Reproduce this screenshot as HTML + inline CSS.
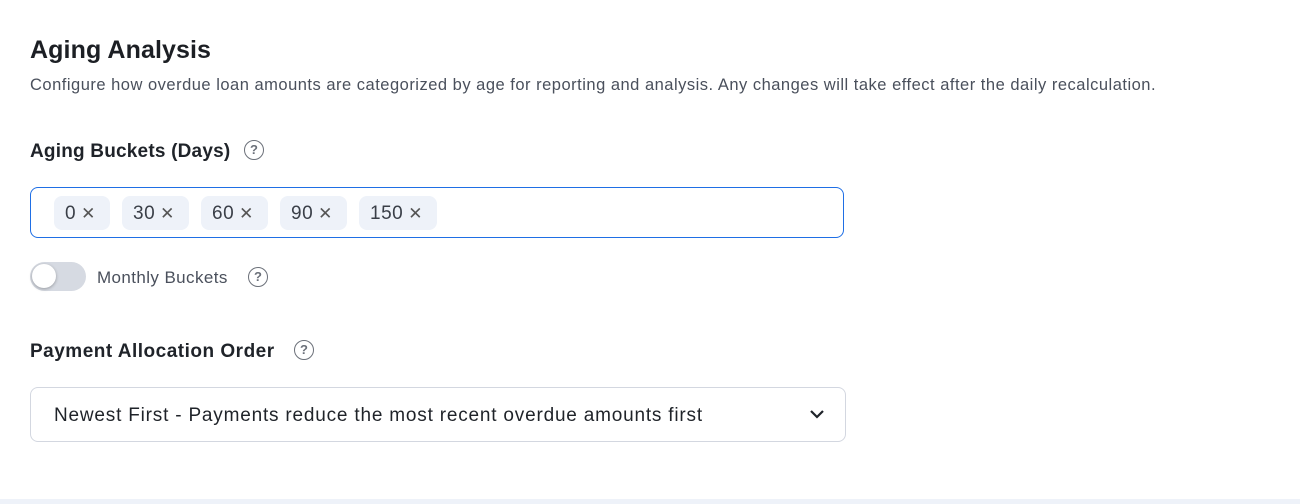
<!DOCTYPE html>
<html><head><style>
body{margin:0;width:1300px;height:504px;background:#fff;font-family:"Liberation Sans",sans-serif;position:relative;overflow:hidden;color:#1f2329}
.a{position:absolute}
h1{position:absolute;left:30px;top:36px;margin:0;font-size:25px;font-weight:bold;color:#1c1f24;letter-spacing:0.1px}
.desc{left:30px;top:76px;font-size:16.5px;color:#4a505c;letter-spacing:0.5px;white-space:nowrap}
.lab{font-size:19px;color:#1f2329;font-weight:bold;letter-spacing:0.2px}
.q{width:18px;height:18px;border:1.8px solid #6b7079;border-radius:50%;font-size:13px;color:#6b7079;text-align:center;line-height:18px;font-weight:bold}
.box{left:30px;top:187px;width:812px;height:49px;border:1.8px solid #1f6fe5;border-radius:8px}
.chip{position:absolute;top:8px;height:34px;background:#eef2f9;border-radius:8px;font-size:19px;line-height:36px;color:#3a3f48;padding:0 11px;box-sizing:border-box;letter-spacing:0.5px}
.chip span{font-size:17px;margin-left:5px;color:#555}
.tog{left:30px;top:262px;width:56px;height:29px;border-radius:15px;background:#d6dae2}
.knob{left:32px;top:264px;width:24px;height:24px;border-radius:50%;background:#fff;box-shadow:0 1px 3px rgba(0,0,0,.3)}
.sel{left:30px;top:387px;width:814px;height:53px;border:1.4px solid #d3d7e0;border-radius:8px}
</style></head><body>
<h1>Aging Analysis</h1>
<div class="a desc">Configure how overdue loan amounts are categorized by age for reporting and analysis. Any changes will take effect after the daily recalculation.</div>
<div class="a lab" style="left:30px;top:141px">Aging Buckets (Days)</div>
<div class="a q" style="left:244px;top:140px">?</div>
<div class="a box">
<div class="chip" style="left:23px;width:56px">0<span>✕</span></div>
<div class="chip" style="left:91px;width:67px">30<span>✕</span></div>
<div class="chip" style="left:170px;width:67px">60<span>✕</span></div>
<div class="chip" style="left:249px;width:67px">90<span>✕</span></div>
<div class="chip" style="left:328px;width:78px">150<span>✕</span></div>
</div>
<div class="a tog"></div><div class="a knob"></div>
<div class="a" style="left:97px;top:268px;font-size:17px;color:#4a505c;letter-spacing:0.4px">Monthly Buckets</div>
<div class="a q" style="left:248px;top:267px">?</div>
<div class="a lab" style="left:30px;top:341px;letter-spacing:0.5px">Payment Allocation Order</div>
<div class="a q" style="left:294px;top:340px">?</div>
<div class="a sel"><div class="a" style="left:23px;top:17px;font-size:19px;color:#1f2329;letter-spacing:0.8px;white-space:nowrap">Newest First - Payments reduce the most recent overdue amounts first</div>
<svg class="a" style="left:778px;top:20px" width="16" height="12" viewBox="0 0 16 12"><path d="M2 3l6 6 6-6" fill="none" stroke="#1f2329" stroke-width="2.2"/></svg></div>
<div class="a" style="left:0;top:499px;width:1300px;height:5px;background:#eef2f9"></div>
</body></html>
